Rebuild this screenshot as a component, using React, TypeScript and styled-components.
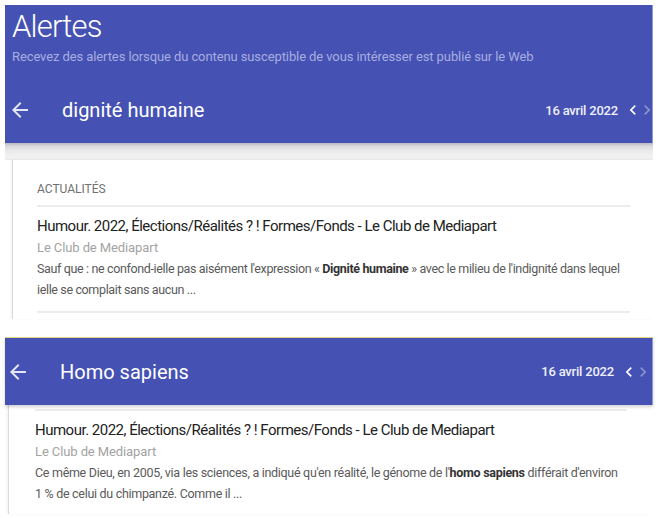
import React from "react";
import styled, { createGlobalStyle } from "styled-components";

const Global = createGlobalStyle`
  html, body { margin: 0; padding: 0; background: #ffffff; }
  body { font-family: Roboto, "Noto Sans", Arial, sans-serif; -webkit-font-smoothing: antialiased; }
  * { box-sizing: border-box; }
`;

const Page = styled.div`
  width: 661px;
  height: 518px;
  overflow: hidden;
  padding: 5px 0 0 5px;
`;

const Section = styled.section<{ $top?: number }>`
  width: 648px;
  margin-top: ${(p) => p.$top ?? 0}px;
`;

const Header = styled.header`
  background: #4551b3;
  padding: 4px 0 8px 7px;
  border-right: 1px solid #8f97d6;
`;

const Title = styled.h1`
  margin: 0;
  font-size: 31px;
  line-height: 36px;
  font-weight: 300;
  letter-spacing: -0.8px;
  color: #ffffff;
`;

const Subtitle = styled.p`
  margin: 4px 0 0;
  font-size: 13px;
  line-height: 16px;
  color: #a7aee0;
  letter-spacing: -0.1px;
`;

const AlertBar = styled.div<{ $yellow?: boolean }>`
  background: #4551b3;
  border-top: ${(p) => (p.$yellow ? "1px solid #e6d57e" : "none")};
  border-right: 1px solid #8f97d6;
  box-shadow: ${(p) => (p.$yellow ? "0 2px 3px rgba(0,0,0,0.18)" : "none")};
  position: relative;
  z-index: 1;
`;

const AlertRow = styled.div<{ $mt: number; $h: number; $pl: number; $pr: number }>`
  display: flex;
  align-items: center;
  height: ${(p) => p.$h}px;
  margin-top: ${(p) => p.$mt}px;
  padding-left: ${(p) => p.$pl}px;
  padding-right: ${(p) => p.$pr}px;
  color: #ffffff;
`;

const BackIcon = styled.svg`
  width: 24px;
  height: 24px;
  margin-left: -4px;
  flex: none;
  fill: #e3e6f6;
`;

const QueryName = styled.div`
  font-size: 20px;
  line-height: 26px;
  font-weight: 400;
  flex: 1;
  margin-left: 30px;
  color: #ffffff;
`;

const DateLabel = styled.div`
  font-size: 13px;
  font-weight: 500;
  letter-spacing: -0.2px;
  color: #eef0fb;
  margin-right: 10px;
`;

const Chevron = styled.svg<{ $dim?: boolean }>`
  width: 10px;
  height: 20px;
  flex: none;
  fill: ${(p) => (p.$dim ? "rgba(255,255,255,0.38)" : "#ffffff")};
  margin-left: ${(p) => (p.$dim ? 4 : 0)}px;
`;

const ShadowStrip = styled.div`
  height: 17px;
  background: linear-gradient(
    to bottom,
    #b8b9c2 0px,
    #d9d9dc 3px,
    #ebebeb 8px,
    #f2f2f2 14px,
    #ececec 17px
  );
`;

const Card = styled.div<{ $ml: number; $pl: number; $pr: number; $pt: number; $pb: number }>`
  margin-left: ${(p) => p.$ml}px;
  border-left: 1px solid #dadada;
  box-shadow: -1px 0 2px rgba(0, 0, 0, 0.06);
  background: #ffffff;
  padding: ${(p) => p.$pt}px ${(p) => p.$pr}px ${(p) => p.$pb}px ${(p) => p.$pl}px;
`;

const Category = styled.div`
  font-size: 12px;
  line-height: 16px;
  color: #707070;
  text-transform: uppercase;
`;

const Divider = styled.div<{ $mt: number }>`
  height: 2px;
  background: #ececec;
  margin-top: ${(p) => p.$mt}px;
`;

const ArticleTitle = styled.div<{ $mt: number }>`
  margin-top: ${(p) => p.$mt}px;
  font-size: 15px;
  line-height: 21px;
  letter-spacing: -0.5px;
  color: #222222;
`;

const Source = styled.div`
  font-size: 13px;
  line-height: 21px;
  letter-spacing: -0.1px;
  color: #a3a3a3;
`;

const Snippet = styled.div<{ $ls: number }>`
  font-size: 12.5px;
  line-height: 21px;
  letter-spacing: ${(p) => p.$ls}px;
  color: #5a5a5a;
  b {
    color: #333333;
    font-weight: 700;
  }
`;

const BackArrow = () => (
  <BackIcon viewBox="0 0 24 24">
    <path d="M20 11H7.83l5.59-5.59L12 4l-8 8 8 8 1.41-1.41L7.83 13H20v-2z" />
  </BackIcon>
);

const ChevronLeft = () => (
  <Chevron viewBox="6 0 12 24">
    <path d="M15.41 7.41L14 6l-6 6 6 6 1.41-1.41L10.83 12z" />
  </Chevron>
);

const ChevronRight = () => (
  <Chevron viewBox="6 0 12 24" $dim>
    <path d="M10 6L8.59 7.41 13.17 12l-4.58 4.59L10 18l6-6z" />
  </Chevron>
);

export default function App() {
  return (
    <>
      <Global />
      <Page>
        <Section>
          <Header>
            <Title>Alertes</Title>
            <Subtitle>
              Recevez des alertes lorsque du contenu susceptible de vous intéresser est publié sur le Web
            </Subtitle>
            <AlertRow $mt={20} $h={50} $pl={0} $pr={0}>
              <BackArrow />
              <QueryName>dignité humaine</QueryName>
              <DateLabel>16 avril 2022</DateLabel>
              <ChevronLeft />
              <ChevronRight />
            </AlertRow>
          </Header>
          <ShadowStrip />
          <Card $ml={7} $pl={24} $pr={23} $pt={21} $pb={6}>
            <Category>Actualités</Category>
            <Divider $mt={8} />
            <ArticleTitle $mt={9}>
              Humour. 2022, Élections/Réalités ? ! Formes/Fonds - Le Club de Mediapart
            </ArticleTitle>
            <Source>Le Club de Mediapart</Source>
            <Snippet $ls={-0.36}>
              Sauf que : ne confond-ielle pas aisément l'expression « <b>Dignité humaine</b> » avec le
              milieu de l'indignité dans lequel ielle se complait sans aucun ...
            </Snippet>
            <Divider $mt={11} />
          </Card>
        </Section>
        <Section $top={18}>
          <AlertBar $yellow>
            <AlertRow $mt={0} $h={67} $pl={5} $pr={4}>
              <BackArrow />
              <QueryName>Homo sapiens</QueryName>
              <DateLabel>16 avril 2022</DateLabel>
              <ChevronLeft />
              <ChevronRight />
            </AlertRow>
          </AlertBar>
          <Card $ml={3} $pl={26} $pr={26} $pt={4} $pb={10}>
            <Divider $mt={0} />
            <ArticleTitle $mt={9}>
              Humour. 2022, Élections/Réalités ? ! Formes/Fonds - Le Club de Mediapart
            </ArticleTitle>
            <Source>Le Club de Mediapart</Source>
            <Snippet $ls={-0.3}>
              Ce même Dieu, en 2005, via les sciences, a indiqué qu'en réalité, le génome de l'
              <b>homo sapiens</b> différait d'environ 1{"\u00a0"}% de celui du chimpanzé. Comme il ...
            </Snippet>
          </Card>
        </Section>
      </Page>
    </>
  );
}
